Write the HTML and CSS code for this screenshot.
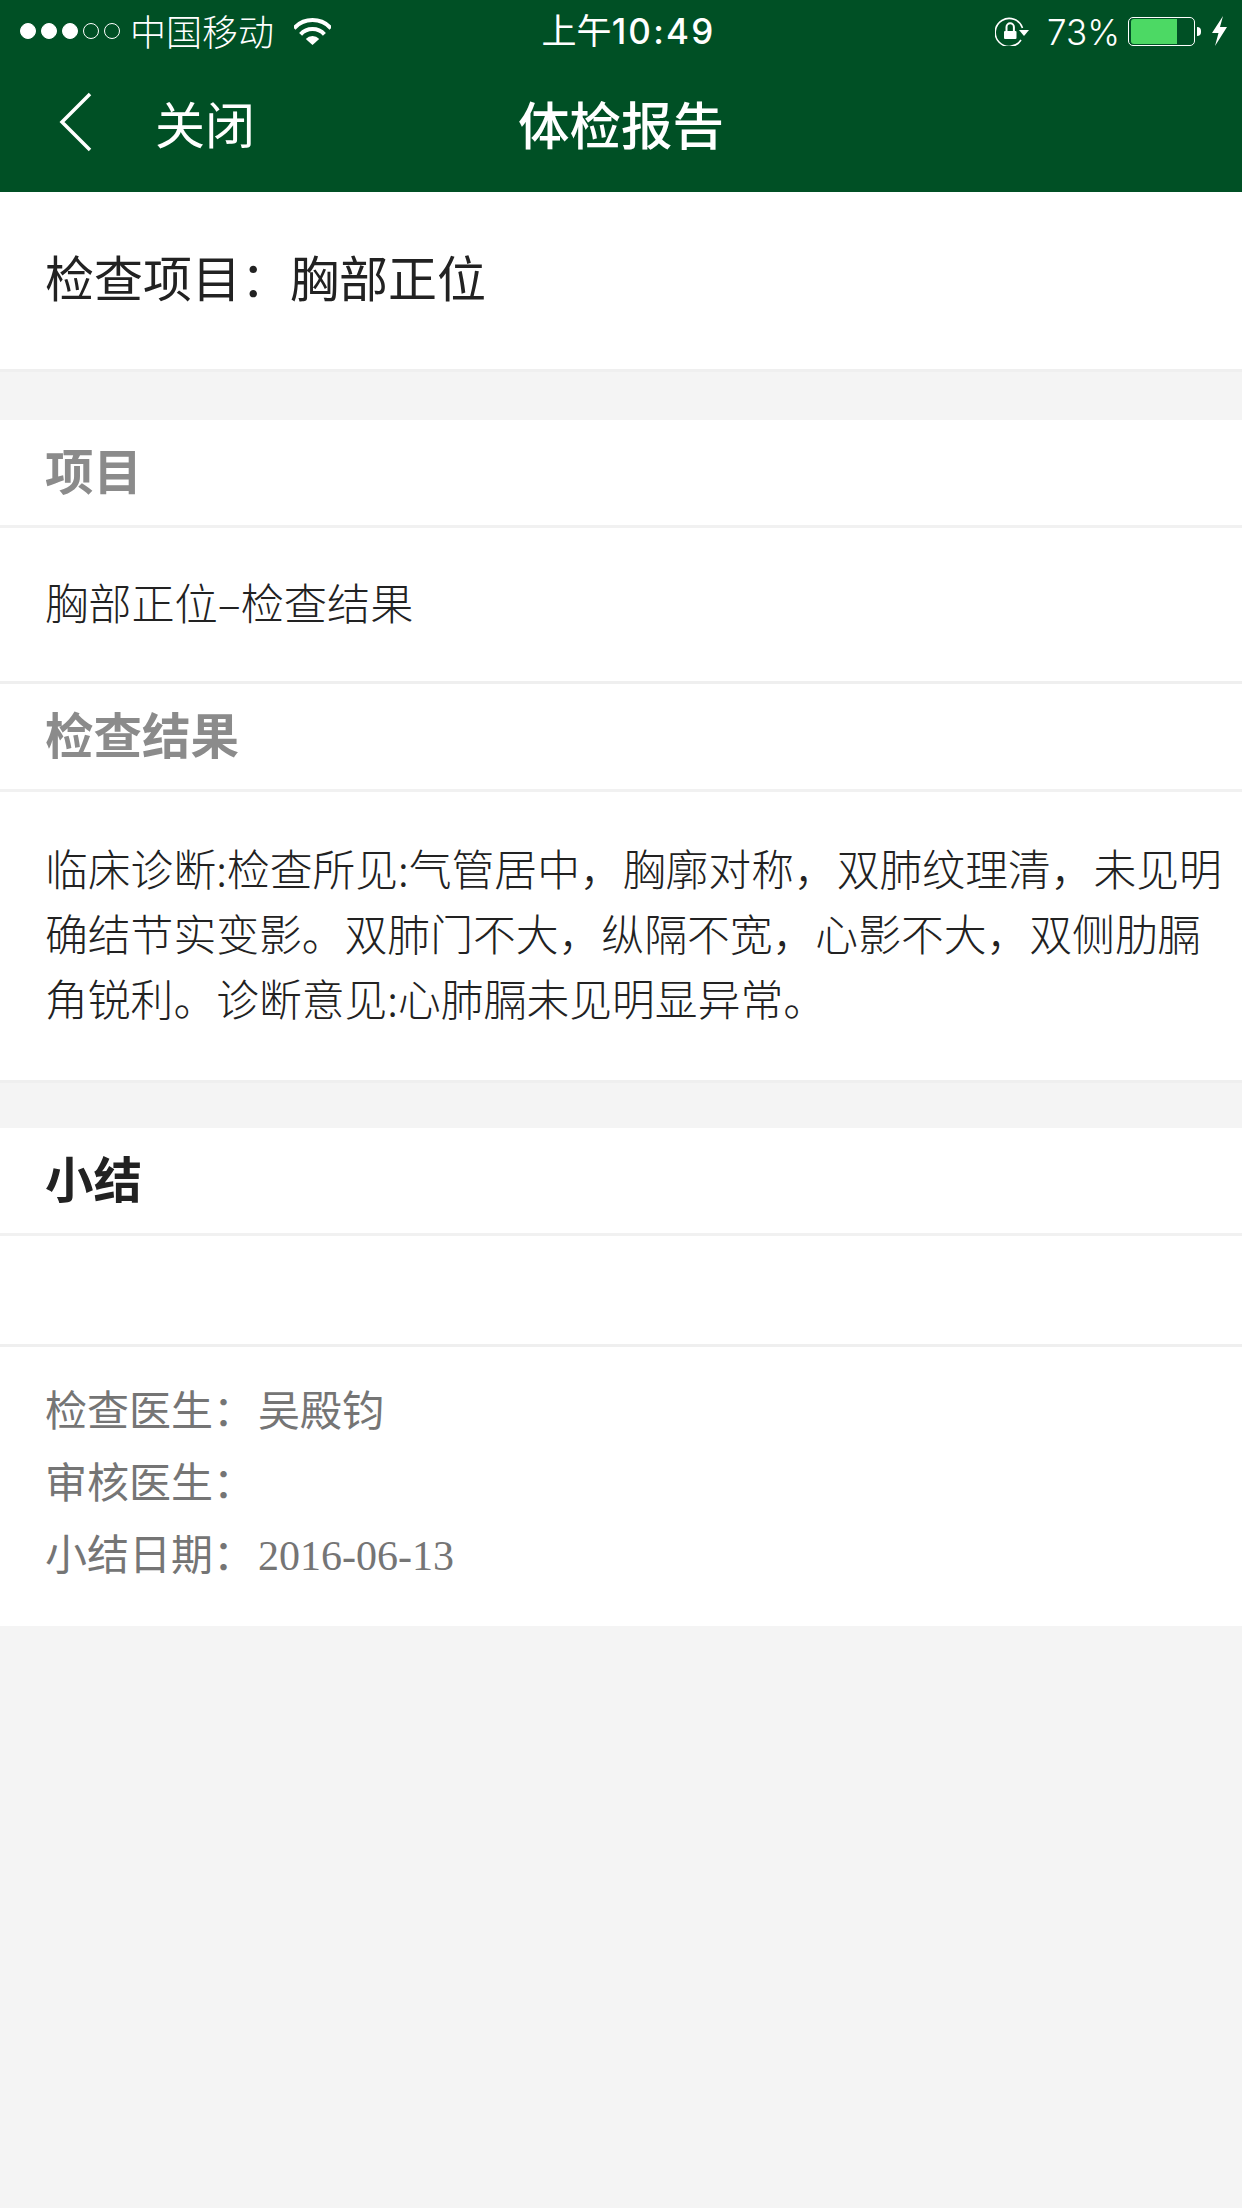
FILE: index.html
```html
<!DOCTYPE html>
<html lang="zh-CN">
<head>
    <meta charset="UTF-8">
    <meta name="viewport" content="width=device-width, initial-scale=1.0">
    <title>体检报告</title>
    <link rel="stylesheet" href="styles.css">
</head>
<body>
<header class="header">
    <!-- Status bar -->
    <div class="status">
        <div class="status-left">
            <div class="signal">
                <i class="dot on"></i><i class="dot on"></i><i class="dot on"></i><i class="dot"></i><i class="dot"></i>
            </div>
            <span class="carrier">中国移动</span>
            <svg class="wifi" width="37" height="27" viewBox="0 0 37 27">
                <path d="M0 10.3 A25 25 0 0 1 37 10.3" fill="none" stroke="#fff" stroke-width="4"/>
                <path d="M6.6 16.3 A16 16 0 0 1 30.4 16.3" fill="none" stroke="#fff" stroke-width="4"/>
                <path d="M18.5 27 L11.8 21 A9 9 0 0 1 25.2 21 Z" fill="#fff"/>
            </svg>
        </div>
        <div class="status-time">上午<span>10:49</span></div>
        <div class="status-right">
            <svg class="lock" width="34" height="30" viewBox="0 0 34 30">
                <path d="M27.5 12 A14 14 0 1 0 26 24" fill="none" stroke="#fff" stroke-width="1.6"/>
                <path d="M24 14 H34 L29 20 Z" fill="#fff"/>
                <rect x="9" y="15" width="12.5" height="8" rx="1" fill="#fff"/>
                <path d="M11.5 15 V11 A3.7 3.7 0 0 1 18.9 11 V15" fill="none" stroke="#fff" stroke-width="2"/>
            </svg>
            <span class="percent">73%</span>
            <div class="battery"><div class="battery-fill"></div></div>
            <div class="battery-nub"></div>
            <svg class="bolt" width="15" height="30" viewBox="0 0 15 30">
                <path d="M11 0 L0 17 H6.5 L3 30 L15 11 H8 Z" fill="#fff"/>
            </svg>
        </div>
    </div>

    <!-- Title bar -->
    <nav class="nav">
        <div class="nav-back">
            <svg class="chevron" width="36" height="62" viewBox="0 0 36 62">
                <path d="M32 3 L4 31 L32 59" fill="none" stroke="#fff" stroke-width="3.5"/>
            </svg>
            <span>关闭</span>
        </div>
        <div class="nav-title">体检报告</div>
    </nav>
</header>

<section class="card card-title">
    <h1>检查项目：胸部正位</h1>
</section>

<section class="card">
    <div class="row-head muted">项目</div>
    <div class="row-body short">胸部正位–检查结果</div>
    <div class="row-head muted">检查结果</div>
    <div class="row-body">临床诊断:检查所见:气管居中，胸廓对称，双肺纹理清，未见明确结节实变影。双肺门不大，纵隔不宽，心影不大，双侧肋膈角锐利。诊断意见:心肺膈未见明显异常。</div>
</section>

<section class="card">
    <div class="row-head">小结</div>
    <div class="row-empty"></div>
    <div class="info">
        <p>检查医生：<span>吴殿钧</span></p>
        <p>审核医生：</p>
        <p>小结日期：<span class="date">2016-06-13</span></p>
    </div>
</section>
</body>
</html>
```

FILE: styles.css
```css
/* General Reset */
* {
    box-sizing: border-box;
}

body {
    margin: 0;
    min-height: 2208px;
    background-color: #f4f4f4;
    color: #222;
    font-family: "Noto Sans CJK SC", "Noto Sans", sans-serif;
}

/* Header */
.header {
    height: 192px;
    background-color: #005025;
    color: #fff;
}

.status {
    display: grid;
    grid-template-columns: 1fr auto 1fr;
    align-items: center;
    height: 60px;
    padding: 0 15px 0 20px;
}

.status-left,
.status-right {
    display: flex;
    align-items: center;
}

.status-right {
    justify-content: flex-end;
}

.signal {
    display: flex;
    gap: 5px;
    margin-right: 10px;
}

.dot {
    width: 16px;
    height: 16px;
    border: 1px solid #fff;
    border-radius: 50%;
}

.dot.on {
    background-color: #fff;
}

.carrier {
    margin-bottom: 2px;
    font-size: 36px;
    font-weight: 300;
    line-height: 58px;
}

.wifi {
    margin-left: 20px;
}

.status-time {
    margin: 0 0 2px 10px;
    font-size: 35px;
    font-weight: 400;
    line-height: 58px;
}

.status-time span {
    font-family: Inter, sans-serif;
    font-weight: 500;
    letter-spacing: 2.2px;
}

.percent {
    margin: 2px 8px 0 18px;
    font-family: Inter, sans-serif;
    font-size: 35px;
    font-weight: 300;
}

.battery {
    width: 67px;
    height: 29px;
    padding: 1px 2px;
    border: 1px solid #fff;
    border-radius: 5px;
}

.battery-fill {
    width: 75%;
    height: 100%;
    background-color: #4cd964;
    border-radius: 3px 0 0 3px;
}

.battery-nub {
    width: 4px;
    height: 9px;
    margin-left: 2px;
    background-color: #fff;
    border-radius: 0 4px 4px 0;
}

.bolt {
    margin-left: 11px;
}

/* Title bar */
.nav {
    display: grid;
    grid-template-columns: 1fr auto 1fr;
    align-items: center;
    height: 132px;
    padding-bottom: 8px;
    font-size: 50px;
    font-weight: 500;
}

.nav-title {
    font-size: 51.5px;
}

.nav-back {
    display: flex;
    align-items: center;
    padding-left: 58px;
    font-weight: 400;
}

.chevron {
    margin-right: 61px;
}

/* Cards */
.card {
    background-color: #fff;
    margin-bottom: 45px;
}

.card-title {
    display: flex;
    align-items: center;
    height: 180px;
    margin-bottom: 48px;
    padding: 0 45px 10px;
    border-bottom: 3px solid #efefef;
}

.card-title h1 {
    margin: 0;
    font-size: 49px;
    font-weight: 400;
}

.row-head {
    height: 108px;
    padding-left: 45px;
    border-bottom: 3px solid #f1f1f1;
    font-size: 48.5px;
    font-weight: 700;
    line-height: 99px;
}

.row-head.muted {
    color: #8b8b8b;
}

.row-body {
    padding: 43px 10px 50px 45px;
    border-bottom: 3px solid #efefef;
    font-size: 42.8px;
    font-weight: 300;
    line-height: 65px;
}

.row-body.short {
    padding-top: 41px;
    padding-bottom: 47px;
    font-size: 43.2px;
}

.row-empty {
    height: 111px;
    border-bottom: 3px solid #efefef;
}

.info {
    height: 279px;
    padding: 25px 45px 0;
    color: #757575;
    font-size: 42px;
    line-height: 72px;
}

.info p {
    margin: 0;
}

.info span {
    margin-left: 3px;
}

.date {
    font-family: "Liberation Serif", serif;
}
```
